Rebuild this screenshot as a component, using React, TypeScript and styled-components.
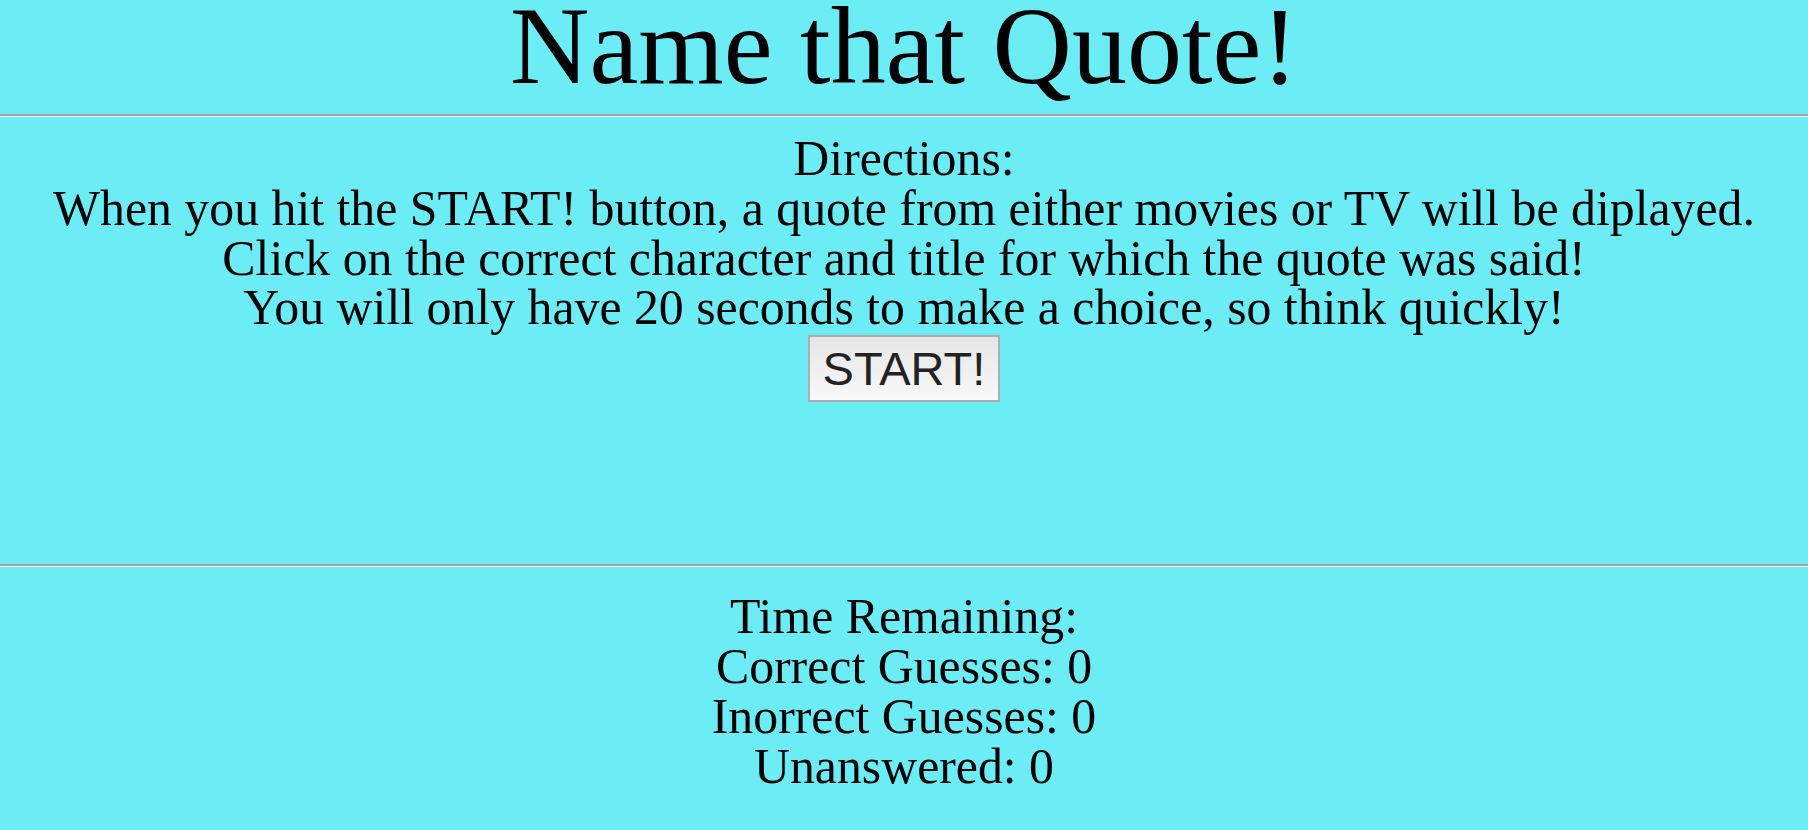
import React from "react";
import styled, { createGlobalStyle } from "styled-components";

const GlobalStyle = createGlobalStyle`
  html, body {
    margin: 0;
    padding: 0;
    background: #6cedf5;
  }
  body {
    font-family: "Liberation Serif", "Times New Roman", serif;
    color: #000;
  }
`;

const Page = styled.div`
  display: flex;
  flex-direction: column;
  min-height: 100vh;
  background: #6cedf5;
`;

const Title = styled.h1`
  margin: 0;
  font-size: 110px;
  line-height: 92px;
  font-weight: 400;
  text-align: center;
  margin-bottom: 22px;
`;

const Divider = styled.hr`
  margin: 0;
  height: 0;
  border: none;
  border-top: 2px solid #a4a4a4;
  border-bottom: 1px solid #ffffff;
  width: 100%;
`;

const Section = styled.section<{ $top: number }>`
  display: flex;
  flex-direction: column;
  align-items: center;
  padding-top: ${(p) => p.$top}px;
  font-size: 49.8px;
  line-height: 49.8px;
  text-align: center;
`;

const Line = styled.div``;

const StartButton = styled.button`
  margin-top: 2px;
  width: 192px;
  height: 67px;
  padding: 0;
  border: 2px solid #adadad;
  border-radius: 0;
  background: linear-gradient(#e6e6e6, #f8f8f8);
  color: #222;
  font-family: "Liberation Sans", Arial, sans-serif;
  font-size: 47px;
  line-height: 1;
  cursor: pointer;
`;

const QuoteArea = styled.div`
  height: 162px;
`;

export default function App() {
  return (
    <>
      <GlobalStyle />
      <Page>
        <Title>Name that Quote!</Title>
        <Divider />
        <Section $top={17}>
          <Line>Directions:</Line>
          <Line>
            When you hit the START! button, a quote from either movies or TV
            will be diplayed.
          </Line>
          <Line>Click on the correct character and title for which the quote was said!</Line>
          <Line>You will only have 20 seconds to make a choice, so think quickly!</Line>
          <StartButton>START!</StartButton>
          <QuoteArea />
        </Section>
        <Divider />
        <Section $top={25}>
          <Line>Time Remaining:</Line>
          <Line>Correct Guesses: 0</Line>
          <Line>Inorrect Guesses: 0</Line>
          <Line>Unanswered: 0</Line>
        </Section>
      </Page>
    </>
  );
}
